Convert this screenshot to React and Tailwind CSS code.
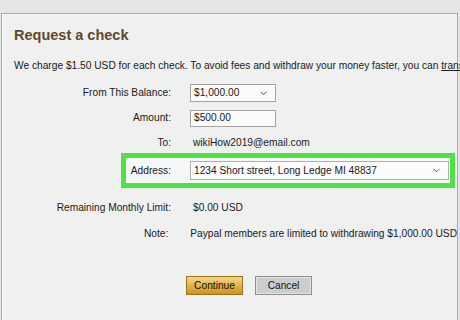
import React from 'react';

const font = { fontFamily: '"Liberation Sans", Arial, sans-serif' };

const Chevron = () => (
    <svg width="7" height="5" viewBox="0 0 7 5" className="shrink-0">
        <polyline points="0.5,0.8 3.5,3.8 6.5,0.8" fill="none" stroke="#4a4a4a" strokeWidth="0.9" />
    </svg>
);

const Row = ({ label, children, className = '' }) => (
    <div className={`flex items-center h-[20px] ${className}`}>
        <div className="w-[169px] text-right">{label}</div>
        <div className="ml-[19px] flex items-center">{children}</div>
    </div>
);

const App = () => {
    return (
        <div className="w-[460px] h-[320px] overflow-hidden bg-[#e6e6e6] pt-[13px] text-[#1a1a1a] text-[10.2px] leading-[14px]" style={font}>
            <div className="ml-[1px] w-[457px] h-[320px] bg-[#f0f0f0] border-t border-l border-r border-[#a9a9a9] shadow-[inset_1px_1px_0_#fafafa] whitespace-nowrap">
                <div className="pl-[12px] pt-[12px] h-[30px] text-[14.5px] leading-[18px] font-bold text-[#5f4a2a]">
                    Request a check
                </div>
                <div className="pl-[12px] mt-[15px]">
                    We charge $1.50 USD for each check. To avoid fees and withdraw your money faster, you can <span className="underline">transfer</span>
                </div>

                <Row label="From This Balance:" className="mt-[10px]">
                    <div className="w-[86px] h-[18px] bg-[#fbfbfb] border border-[#a3a3a3] flex items-center justify-between pl-[3px] pr-[8px]">
                        <span>$1,000.00</span>
                        <Chevron />
                    </div>
                </Row>
                <Row label="Amount:" className="mt-[5px]">
                    <div className="w-[86px] h-[17px] bg-[#fbfbfb] border border-[#a3a3a3] flex items-center pl-[3px]">
                        $500.00
                    </div>
                </Row>
                <Row label="To:" className="mt-[5px]">
                    <span className="ml-[3px]">wikiHow2019@email.com</span>
                </Row>

                <div className="ml-[119px] w-[334px] h-[35px] border-[5px] border-[#4fe04a] bg-[#f6f6f6] flex items-center">
                    <div className="w-[45px] text-right">Address:</div>
                    <div className="ml-[19px] w-[259px] h-[19px] bg-[#fcfcfc] border border-[#b0b0b0] flex items-center justify-between pl-[3px] pr-[8px]">
                        <span>1234 Short street, Long Ledge MI 48837</span>
                        <Chevron />
                    </div>
                </div>

                <Row label="Remaining Monthly Limit:" className="mt-[10px]">
                    <span className="ml-[3px]">$0.00 USD</span>
                </Row>
                <Row label="Note:" className="mt-[6px]">
                    <span className="ml-[3px]">Paypal members are limited to withdrawing $1,000.00 USD</span>
                </Row>

                <div className="flex gap-[12px] ml-[184px] mt-[32px]">
                    <button className="w-[57px] h-[19px] border border-[#9c7418] bg-gradient-to-b from-[#f5d88a] via-[#e2b447] to-[#c99422] text-[#111] text-[10.2px] leading-[14px]" style={font}>
                        Continue
                    </button>
                    <button className="w-[57px] h-[19px] border border-[#8e8e8e] bg-[#cdcdcd] shadow-[inset_0_0_0_1px_#e4e4e4] text-[#111] text-[10.2px] leading-[14px]" style={font}>
                        Cancel
                    </button>
                </div>
            </div>
        </div>
    );
};

export default App;
